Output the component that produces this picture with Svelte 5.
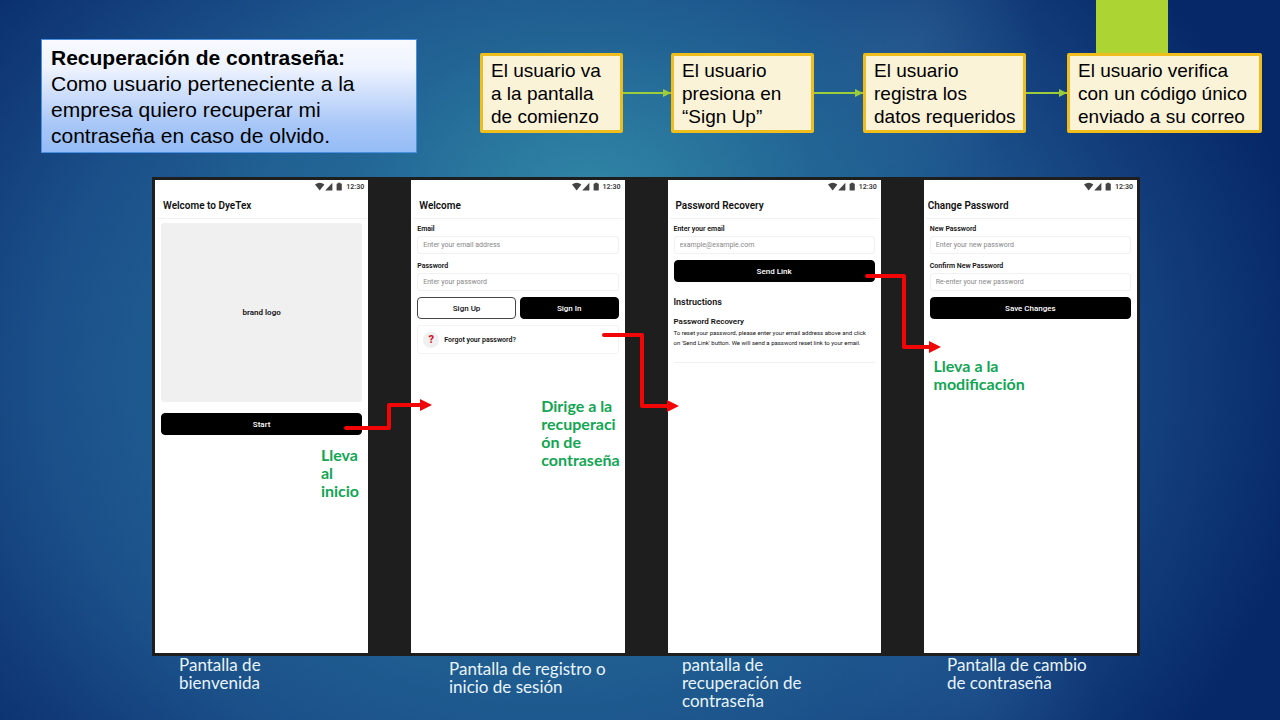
<script>
  const steps = [
    'El usuario va\na la pantalla\nde comienzo',
    'El usuario\npresiona en\n“Sign Up”',
    'El usuario\nregistra los\ndatos requeridos',
    'El usuario verifica\ncon un código único\nenviado a su correo'
  ];
  const captions = [
    'Pantalla de\nbienvenida',
    'Pantalla de registro o\ninicio de sesión',
    'pantalla de\nrecuperación de\ncontraseña',
    'Pantalla de cambio\nde contraseña'
  ];
</script>

{#snippet top(title, tight)}
  <div class="status">
    <svg width="28" height="9" viewBox="0 0 28 9" aria-hidden="true">
      <path d="M0 2.4Q4.7-1.1 9.4 2.4L4.7 8.4Z" />
      <path d="M10.2 8.4L17.4 .8V8.4Z" />
      <path d="M22 1.6h1V.8h2.4v.8h1q.4 0 .4.4v6q0 .4-.4.4h-4.4q-.4 0-.4-.4V2q0-.4.4-.4Z" />
    </svg>
    <span>12:30</span>
  </div>
  <h2 class:tight>{title}</h2>
{/snippet}

{#snippet field(id, label, placeholder, type)}
  <div class="field">
    <label for={id}>{label}</label>
    <input {id} {type} {placeholder} />
  </div>
{/snippet}

<main>
  <div class="ribbon"></div>

  <header>
    <section class="note">
      <h1>Recuperación de contraseña:</h1>
      <p>Como usuario perteneciente a la empresa quiero recuperar mi contraseña en caso de olvido.</p>
    </section>
    <div class="flow">
      {#each steps as step, i}
        {#if i > 0}
          <div class="link"></div>
        {/if}
        <div class="step">{step}</div>
      {/each}
    </div>
  </header>

  <div class="board">
    <section class="phone">
      {@render top('Welcome to DyeTex', false)}
      <div class="body">
        <div class="brand">brand logo</div>
        <button class="start">Start</button>
      </div>
    </section>

    <section class="phone">
      {@render top('Welcome', false)}
      <div class="body">
        {@render field('email', 'Email', 'Enter your email address', 'email')}
        {@render field('password', 'Password', 'Enter your password', 'password')}
        <div class="pair">
          <button class="outline">Sign Up</button>
          <button>Sign In</button>
        </div>
        <a class="forgot" href="#recovery"><span class="mark">?</span>Forgot your password?</a>
      </div>
    </section>

    <section class="phone" id="recovery">
      {@render top('Password Recovery', false)}
      <div class="body">
        {@render field('recovery-email', 'Enter your email', 'example@example.com', 'email')}
        <button>Send Link</button>
        <div class="help">
          <h3>Instructions</h3>
          <h4>Password Recovery</h4>
          <p>To reset your password, please enter your email address above and click on 'Send Link' button. We will send a password reset link to your email.</p>
        </div>
      </div>
    </section>

    <section class="phone">
      {@render top('Change Password', true)}
      <div class="body">
        {@render field('new-password', 'New Password', 'Enter your new password', 'password')}
        {@render field('confirm-password', 'Confirm New Password', 'Re-enter your new password', 'password')}
        <button>Save Changes</button>
      </div>
    </section>

    <svg class="arrows" viewBox="0 0 988 479" preserveAspectRatio="none" aria-hidden="true">
      <path class="line" d="M194 251H237V228H270" />
      <path class="head" d="M268 222L280 228L268 234Z" />
      <path class="line" d="M452 158H490V229H517" />
      <path class="head" d="M515 223L527 229L515 235Z" />
      <path class="line" d="M715 99H752V170H779" />
      <path class="head" d="M777 164L789 170L777 176Z" />
    </svg>

    <p class="hint to-start">Lleva<br />al<br />inicio</p>
    <p class="hint to-recovery">Dirige a la<br />recuperaci<br />ón de<br />contraseña</p>
    <p class="hint to-change">Lleva a la<br />modificación</p>
  </div>

  <footer>
    {#each captions as caption, i}
      <p class:low={i === 1}>{caption}</p>
    {/each}
  </footer>
</main>

<style>
  :global(body) {
    margin: 0;
  }

  main {
    position: relative;
    box-sizing: border-box;
    min-height: 100vh;
    overflow: hidden;
    background:
      radial-gradient(ellipse 9% 20% at 72% 5%, rgba(70, 120, 165, 0.25), transparent),
      radial-gradient(ellipse 10% 18% at 76% 96%, rgba(45, 100, 160, 0.3), transparent),
      radial-gradient(ellipse 32% 38% at 46% 26%, rgba(54, 148, 172, 0.7), rgba(44, 130, 165, 0.25) 55%, transparent),
      radial-gradient(ellipse 58% 86% at 43% 52%, #23689a 0%, #1f5c90 50%, #1b5089 68%, #113b78 86%, #062768 104%);
  }

  h1, h2, h3, h4, p {
    margin: 0;
  }

  .ribbon {
    position: absolute;
    top: 0;
    right: 112px;
    width: 72px;
    height: 90px;
    background: #acd433;
  }

  header {
    position: relative;
    display: grid;
    grid-template-columns: 376fr 782fr;
    align-items: start;
    gap: 63px;
    padding: 39px 18px 24px 41px;
    font-family: 'Liberation Sans', Arial, sans-serif;
    color: #000;
  }

  .note {
    padding: 5px 9px 3px;
    border: 1px solid #4a90e2;
    background: linear-gradient(#f8faff 0%, #eef3fe 25%, #a9c7f8 75%, #94bcf6 100%);
    font-size: 21px;
    line-height: 26px;
  }

  .note h1 {
    font-size: 21px;
  }

  .flow {
    display: grid;
    grid-template-columns: 143fr 48fr 143fr 49fr 163fr 41fr 195fr;
    align-items: center;
    margin-top: 14px;
  }

  .step {
    padding: 3px 0 2px 8px;
    border: 3px solid #f0be1c;
    border-radius: 2px;
    background: #fbf3d8;
    font-size: 19px;
    line-height: 23px;
    white-space: pre;
  }

  .link {
    position: relative;
    height: 2px;
    background: #9ccb3c;
  }

  .link::after {
    content: '';
    position: absolute;
    right: 0;
    top: -3px;
    border: 4px solid transparent;
    border-left: 8px solid #9ccb3c;
    border-right: 0;
  }

  .board {
    position: relative;
    display: grid;
    grid-template-columns: repeat(4, 1fr);
    gap: 43px;
    margin: 0 140px 0 152px;
    padding: 3px;
    background: #1e1e1e;
    font-family: Roboto, sans-serif;
    color: #111;
  }

  .phone {
    min-height: 473px;
    background: #fff;
  }

  .status {
    display: flex;
    justify-content: flex-end;
    align-items: center;
    gap: 3px;
    height: 13px;
    padding-right: 4px;
    font-size: 7px;
    font-weight: 600;
    color: #333;
  }

  .status svg {
    fill: #444;
  }

  h2 {
    margin: 0 2px;
    padding: 1px 0 0 6px;
    border-bottom: 1px solid #f1f1f1;
    font-size: 10px;
    font-weight: 600;
    line-height: 24px;
  }

  h2.tight {
    padding-left: 2px;
  }

  .body {
    display: flex;
    flex-direction: column;
    gap: 6px;
    padding: 4px 6px;
  }

  .brand {
    display: grid;
    place-items: center;
    height: 179px;
    border-radius: 3px;
    background: #f0f0f0;
    font-size: 8px;
    font-weight: 600;
  }

  .start {
    margin-top: 5px;
  }

  button {
    box-sizing: border-box;
    height: 22px;
    padding: 0;
    border: 1px solid #000;
    border-radius: 4px;
    background: #000;
    font: 500 8px Roboto, sans-serif;
    color: #fff;
  }

  button.outline {
    border-color: #444;
    background: #fff;
    color: #111;
  }

  .pair {
    display: grid;
    grid-template-columns: 1fr 1fr;
    gap: 4px;
  }

  .field {
    display: flex;
    flex-direction: column;
  }

  label {
    font-size: 7px;
    font-weight: 600;
    line-height: 13px;
  }

  input {
    box-sizing: border-box;
    width: 100%;
    height: 18px;
    padding: 0 5px;
    border: 1px solid #f1f1f1;
    border-radius: 3px;
    font: 7px Roboto, sans-serif;
  }

  input::placeholder {
    color: #888;
  }

  .forgot {
    display: flex;
    align-items: center;
    gap: 5px;
    box-sizing: border-box;
    height: 29px;
    padding-left: 5px;
    border: 1px solid #f3f3f3;
    border-radius: 3px;
    font-size: 7px;
    font-weight: 600;
    color: #111;
    text-decoration: none;
  }

  .mark {
    display: grid;
    place-items: center;
    width: 16px;
    height: 16px;
    border-radius: 50%;
    background: #f0f0f0;
    font-size: 11px;
    font-weight: 800;
    color: #d31422;
  }

  .help {
    margin-top: 8px;
    padding-bottom: 14px;
    border-bottom: 1px solid #f0f0f0;
  }

  h3 {
    font-size: 9px;
    font-weight: 600;
    line-height: 13px;
  }

  h4 {
    margin-top: 7px;
    font-size: 8px;
    font-weight: 600;
    line-height: 12px;
  }

  .help p {
    padding-right: 6px;
    font-size: 6px;
    line-height: 10px;
  }

  .arrows {
    position: absolute;
    inset: 0;
    width: 100%;
    height: 100%;
  }

  .line {
    fill: none;
    stroke: #f20505;
    stroke-width: 4;
    stroke-linecap: round;
    stroke-linejoin: round;
  }

  .head {
    fill: #f20505;
  }

  .hint {
    position: absolute;
    font: 700 16px/18px 'Century Gothic', 'URW Gothic', Lato, sans-serif;
    color: #12a653;
  }

  .to-start {
    left: 17.1%;
    top: 269px;
  }

  .to-recovery {
    left: 39.4%;
    top: 220px;
  }

  .to-change {
    left: 79.1%;
    top: 180px;
  }

  footer {
    display: grid;
    grid-template-columns: 270fr 233fr 265fr 193fr;
    margin: 0 140px 0 179px;
    font: 17px/18px 'Century Gothic', 'URW Gothic', Lato, sans-serif;
    color: #e8f4fc;
    white-space: pre-line;
  }

  .low {
    padding-top: 4px;
  }
</style>
